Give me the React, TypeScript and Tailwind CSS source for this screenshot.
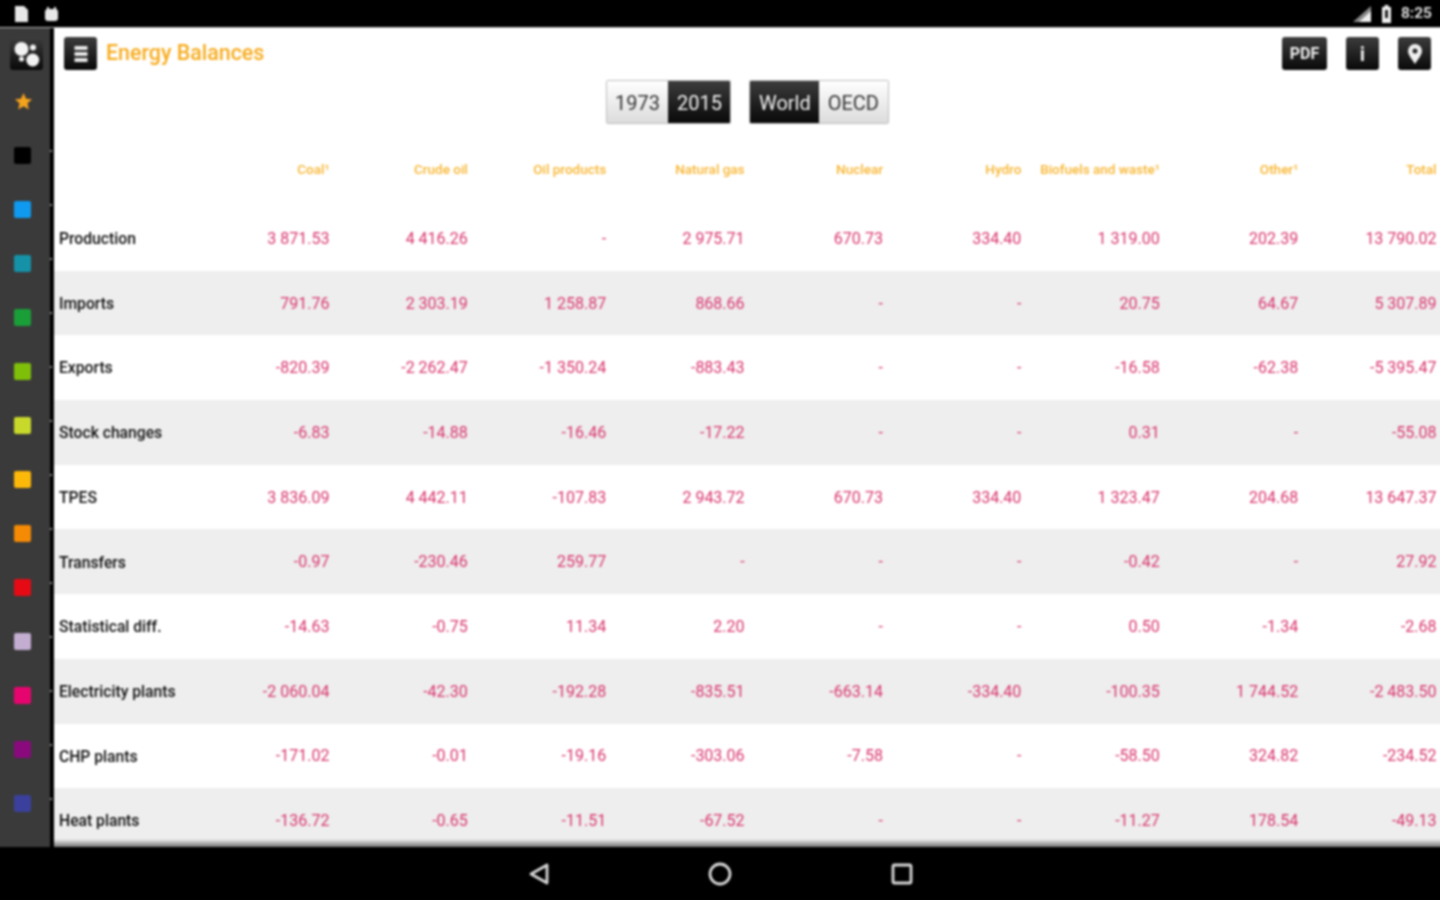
import React from "react";

const headers = ["Coal¹", "Crude oil", "Oil products", "Natural gas", "Nuclear", "Hydro", "Biofuels and waste¹", "Other¹", "Total"];
const rows: [string, string[]][] = [
  ["Production", ["3 871.53", "4 416.26", "-", "2 975.71", "670.73", "334.40", "1 319.00", "202.39", "13 790.02"]],
  ["Imports", ["791.76", "2 303.19", "1 258.87", "868.66", "-", "-", "20.75", "64.67", "5 307.89"]],
  ["Exports", ["-820.39", "-2 262.47", "-1 350.24", "-883.43", "-", "-", "-16.58", "-62.38", "-5 395.47"]],
  ["Stock changes", ["-6.83", "-14.88", "-16.46", "-17.22", "-", "-", "0.31", "-", "-55.08"]],
  ["TPES", ["3 836.09", "4 442.11", "-107.83", "2 943.72", "670.73", "334.40", "1 323.47", "204.68", "13 647.37"]],
  ["Transfers", ["-0.97", "-230.46", "259.77", "-", "-", "-", "-0.42", "-", "27.92"]],
  ["Statistical diff.", ["-14.63", "-0.75", "11.34", "2.20", "-", "-", "0.50", "-1.34", "-2.68"]],
  ["Electricity plants", ["-2 060.04", "-42.30", "-192.28", "-835.51", "-663.14", "-334.40", "-100.35", "1 744.52", "-2 483.50"]],
  ["CHP plants", ["-171.02", "-0.01", "-19.16", "-303.06", "-7.58", "-", "-58.50", "324.82", "-234.52"]],
  ["Heat plants", ["-136.72", "-0.65", "-11.51", "-67.52", "-", "-", "-11.27", "178.54", "-49.13"]],
];
const swatches = ["#000000", "#0f9af0", "#1592a8", "#1a9e38", "#7fbf0a", "#c9d92c", "#fdb90a", "#f58a05", "#e60a14", "#c3aed2", "#e6056f", "#8a0a7d", "#3a409c"];

const dark = "bg-gradient-to-b from-[#3d3d3d] to-[#0a0a0a]";

function Sidebar() {
  return (
    <div className="w-[58px] shrink-0 flex bg-[#3a3a3a] pl-[4px]">
      <div className="flex-1 flex flex-col items-start">
        <div className={`mt-[9px] ml-[10px] w-[33px] h-[33px] rounded-[3px] ${dark}`}>
          <svg width="33" height="33" viewBox="0 0 33 33" fill="#f2f2f2">
            <circle cx="11.5" cy="12" r="7" />
            <circle cx="23" cy="10.5" r="3" />
            <circle cx="11.5" cy="22" r="2.5" />
            <circle cx="22.7" cy="23" r="6.5" />
          </svg>
        </div>
        <svg className="mt-[22px] ml-[14px]" width="19" height="19" viewBox="0 0 20 20" fill="#f5a31c">
          <path d="M10 1l2.7 6 6.3.6-4.8 4.3 1.4 6.4L10 15l-5.6 3.3 1.4-6.4L1 7.6 7.3 7z" />
        </svg>
        <div className="flex flex-col gap-[37px] mt-[36px] ml-[14px]">
          {swatches.map((c) => (
            <div key={c} className="w-[17px] h-[17px] rounded-[2px]" style={{ backgroundColor: c }} />
          ))}
        </div>
      </div>
      <div className="w-[4px] bg-black flex flex-col gap-[52px] pt-[122px]">
        {swatches.map((c) => (
          <div key={c} className="w-[2px] h-[2px] bg-[#8a8a8a]" />
        ))}
      </div>
    </div>
  );
}

function Seg({ a, b, active }: { a: string; b: string; active: 0 | 1 }) {
  const on = `${dark} text-[#f4f4f4]`;
  const off = "bg-gradient-to-b from-[#ffffff] to-[#dcdcdc] text-[#333333]";
  return (
    <div className="flex h-[44px] rounded-[2px] border border-[#bdbdbd] overflow-hidden text-[20px]">
      <div className={`px-[8.5px] pt-[1px] flex items-center ${active === 0 ? on : off}`}>{a}</div>
      <div className={`px-[8.5px] pt-[1px] flex items-center ${active === 1 ? on : off}`}>{b}</div>
    </div>
  );
}

function IconBtn({ w, children }: { w: string; children: React.ReactNode }) {
  return <div className={`${w} h-[33px] rounded-[3px] ${dark} flex items-center justify-center text-[#eeeeee]`}>{children}</div>;
}

export default function App() {
  return (
    <div className="w-[1440px] h-[900px] overflow-hidden bg-black">
      <div className="w-[1448px] h-[908px] -ml-[4px] -mt-[4px] flex flex-col bg-black font-['Roboto',sans-serif] blur-[0.8px]">
        <div className="h-[31px] shrink-0 bg-black flex items-center justify-between pt-[4px] pl-[18px] pr-[12px] text-[#dddddd]">
          <div className="flex items-center gap-[15px]">
            <svg width="15" height="16" viewBox="0 0 15 16" fill="#e8e8e8"><path d="M1 0h9l4 4v12H1z" /></svg>
            <svg width="15" height="14" viewBox="0 0 15 14" fill="#e8e8e8"><rect x="1" y="2" width="13" height="12" rx="3" /><rect x="3" y="0" width="2" height="4" /><rect x="10" y="0" width="2" height="4" /></svg>
          </div>
          <div className="flex items-center gap-[9px]">
            <svg width="20" height="18" viewBox="0 0 20 18"><path d="M19 1v16H1z" fill="#8a8a8a" /><path d="M19 6v11H7z" fill="#eeeeee" /></svg>
            <svg width="11" height="18" viewBox="0 0 11 18" fill="#eeeeee"><path d="M1 2h2.5V0h4v2H10v16H1z" /><rect x="4" y="5" width="3" height="8" fill="#222" /></svg>
            <span className="text-[15.5px] font-bold">8:25</span>
          </div>
        </div>

        <div className="h-[820px] shrink-0 flex border-t border-[#bbbbbb]">
          <Sidebar />
          <div className="flex-1 min-w-0 flex flex-col bg-white">
            <div className="h-[52px] shrink-0 flex items-start justify-between pt-[9px] pl-[10px] pr-[13px]">
              <div className="flex items-center gap-[9px]">
                <IconBtn w="w-[33px]">
                  <svg width="16" height="18" viewBox="0 0 16 18" fill="#e8e8e8"><rect x="1.5" y="1" width="13" height="4" /><rect x="1.5" y="7" width="13" height="4" /><rect x="1.5" y="13" width="13" height="4" /></svg>
                </IconBtn>
                <span className="text-[21.4px] font-medium text-[#f7ac1f]">Energy Balances</span>
              </div>
              <div className="flex items-center gap-[19px]">
                <IconBtn w="w-[45px]"><span className="text-[16px] font-bold">PDF</span></IconBtn>
                <IconBtn w="w-[33px]"><span className="text-[20px] font-bold">i</span></IconBtn>
                <IconBtn w="w-[33px]">
                  <svg width="16" height="22" viewBox="0 0 16 22"><path fillRule="evenodd" fill="#f0f0f0" d="M8 1a7 7 0 0 1 7 7c0 4-4 8-7 13C5 16 1 12 1 8a7 7 0 0 1 7-7zm0 4.5a2.5 2.5 0 1 0 0 5 2.5 2.5 0 0 0 0-5z" /></svg>
                </IconBtn>
              </div>
            </div>
            <div className="flex justify-center gap-[18px] h-[46px] shrink-0 pr-[4px]">
              <Seg a="1973" b="2015" active={1} />
              <Seg a="World" b="OECD" active={0} />
            </div>
            <div className="h-[80px] shrink-0 flex items-center pl-[5px] pr-[8px] pt-[7px] text-[13.5px] font-medium text-[#f8b530]">
              <div className="w-[132px] shrink-0" />
              {headers.map((h) => (
                <div key={h} className="w-[138.4px] shrink-0 text-right">{h}</div>
              ))}
            </div>
            <div className="flex-1 min-h-0 overflow-hidden">
              {rows.map(([label, vals], i) => (
                <div key={label} className={`h-[64.7px] flex items-center pl-[5px] pr-[8px] pt-[1px] ${i % 2 ? "bg-[#eeeeee]" : "bg-white"}`}>
                  <div className="w-[132px] shrink-0 text-[15.7px] font-medium text-[#111111]">{label}</div>
                  {vals.map((v, j) => (
                    <div key={j} className="w-[138.4px] shrink-0 text-right text-[16px] text-[#d9356f]">{v}</div>
                  ))}
                </div>
              ))}
            </div>
            <div className="h-[8px] shrink-0 bg-gradient-to-b from-[#eeeeee] to-[#777777]" />
          </div>
        </div>

        <div className="flex-1 bg-black flex items-center justify-center gap-[157px] pb-[4px]">
          <svg width="24" height="24" viewBox="0 0 24 24" fill="none" stroke="#d8d8d8" strokeWidth="2.8" strokeLinejoin="round"><path d="M20 3v18L4 12z" /></svg>
          <svg width="24" height="24" viewBox="0 0 24 24" fill="none" stroke="#d8d8d8" strokeWidth="2.8"><circle cx="12" cy="12" r="10" /></svg>
          <svg width="24" height="24" viewBox="0 0 24 24" fill="none" stroke="#d8d8d8" strokeWidth="2.8" strokeLinejoin="round"><rect x="4" y="3" width="18" height="18" rx="1.5" /></svg>
        </div>
      </div>
    </div>
  );
}
